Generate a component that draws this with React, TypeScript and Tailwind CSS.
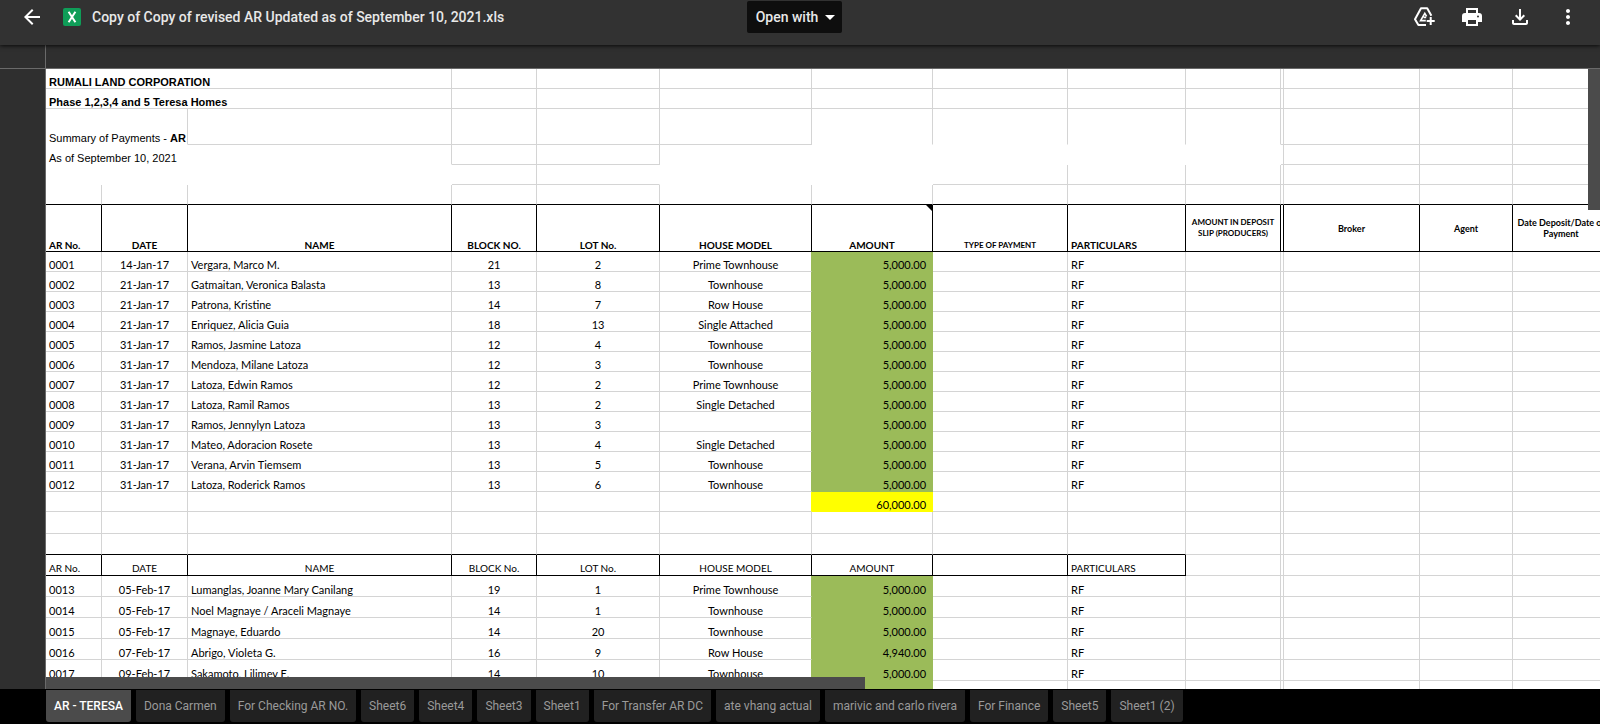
import React from "react";
import { MdArrowBack, MdArrowDropDown, MdMoreVert, MdOutlineFileDownload } from "react-icons/md";

const TABS = [
  "AR - TERESA",
  "Dona Carmen",
  "For Checking AR NO.",
  "Sheet6",
  "Sheet4",
  "Sheet3",
  "Sheet1",
  "For Transfer AR DC",
  "ate vhang actual",
  "marivic and carlo rivera",
  "For Finance",
  "Sheet5",
  "Sheet1 (2)",
];

type Payment = [no: string, date: string, name: string, block: string, lot: string, model: string, amount: string];

const JANUARY: Payment[] = [
  ["0001", "14-Jan-17", "Vergara, Marco M.", "21", "2", "Prime Townhouse", "5,000.00"],
  ["0002", "21-Jan-17", "Gatmaitan, Veronica Balasta", "13", "8", "Townhouse", "5,000.00"],
  ["0003", "21-Jan-17", "Patrona, Kristine", "14", "7", "Row House", "5,000.00"],
  ["0004", "21-Jan-17", "Enriquez, Alicia Guia", "18", "13", "Single Attached", "5,000.00"],
  ["0005", "31-Jan-17", "Ramos, Jasmine Latoza", "12", "4", "Townhouse", "5,000.00"],
  ["0006", "31-Jan-17", "Mendoza, Milane Latoza", "12", "3", "Townhouse", "5,000.00"],
  ["0007", "31-Jan-17", "Latoza, Edwin Ramos", "12", "2", "Prime Townhouse", "5,000.00"],
  ["0008", "31-Jan-17", "Latoza, Ramil Ramos", "13", "2", "Single Detached", "5,000.00"],
  ["0009", "31-Jan-17", "Ramos, Jennylyn Latoza", "13", "3", "", "5,000.00"],
  ["0010", "31-Jan-17", "Mateo, Adoracion Rosete", "13", "4", "Single Detached", "5,000.00"],
  ["0011", "31-Jan-17", "Verana, Arvin Tiemsem", "13", "5", "Townhouse", "5,000.00"],
  ["0012", "31-Jan-17", "Latoza, Roderick Ramos", "13", "6", "Townhouse", "5,000.00"],
];

const FEBRUARY: Payment[] = [
  ["0013", "05-Feb-17", "Lumanglas, Joanne Mary Canilang", "19", "1", "Prime Townhouse", "5,000.00"],
  ["0014", "05-Feb-17", "Noel Magnaye / Araceli Magnaye", "14", "1", "Townhouse", "5,000.00"],
  ["0015", "05-Feb-17", "Magnaye, Eduardo", "14", "20", "Townhouse", "5,000.00"],
  ["0016", "07-Feb-17", "Abrigo, Violeta G.", "16", "9", "Row House", "4,940.00"],
  ["0017", "09-Feb-17", "Sakamoto, Lilimey E.", "14", "10", "Townhouse", "5,000.00"],
  ["", "", "", "", "", "", ""],
];

type CellProps = {
  span?: number;
  right?: "grid" | "black" | "green" | "yellow" | "none";
  bottom?: "grid" | "black" | "green" | "yellow" | "none";
  className?: string;
  children?: React.ReactNode;
};

const RIGHT = {
  grid: "border-r-[#d4d4d4]",
  black: "border-r-black",
  green: "border-r-[#9bbb59]",
  yellow: "border-r-[#ffff00]",
  none: "border-r-transparent",
};

const BOTTOM = {
  grid: "border-b-[#d4d4d4]",
  black: "border-b-black",
  green: "border-b-[#9bbb59]",
  yellow: "border-b-[#ffff00]",
  none: "border-b-transparent",
};

function Cell({ span, right = "grid", bottom = "grid", className = "", children }: CellProps) {
  return (
    <td
      colSpan={span}
      className={`border-r border-b px-[3px] align-bottom whitespace-nowrap ${RIGHT[right]} ${BOTTOM[bottom]} ${className}`}
    >
      {children}
    </td>
  );
}

function Head({ bottom = "black", right = "black", className = "", children }: CellProps) {
  return (
    <th scope="col" className={`relative border-r border-b px-[3px] ${RIGHT[right]} ${BOTTOM[bottom]} ${className}`}>
      {children}
    </th>
  );
}

function Blanks({ count, bottom }: { count: number; bottom?: CellProps["bottom"] }) {
  return (
    <>
      {Array.from({ length: count }, (_, i) => (
        <Cell key={i} bottom={bottom} />
      ))}
    </>
  );
}

function PaymentRow({ row, height }: { row: Payment; height: string }) {
  const [no, date, name, block, lot, model, amount] = row;
  return (
    <tr className={height}>
      <Cell>{no}</Cell>
      <Cell className="text-center">{date}</Cell>
      <Cell>{name}</Cell>
      <Cell className="text-center">{block}</Cell>
      <Cell className="text-center">{lot}</Cell>
      <Cell right="green" className="text-center">
        {model}
      </Cell>
      <Cell right="green" bottom="green" className="bg-[#9bbb59] pr-[6px] text-right">
        {amount}
      </Cell>
      <Cell />
      <Cell>{no && "RF"}</Cell>
      <Blanks count={5} />
    </tr>
  );
}

function Sheet() {
  return (
    <table className="w-[1564px] table-fixed border-separate border-spacing-0 bg-white font-['Lato',sans-serif] text-[11px] leading-[12px] text-black">
      <colgroup>
        <col className="w-[56px]" />
        <col className="w-[86px]" />
        <col className="w-[264px]" />
        <col className="w-[85px]" />
        <col className="w-[123px]" />
        <col className="w-[152px]" />
        <col className="w-[121px]" />
        <col className="w-[135px]" />
        <col className="w-[118px]" />
        <col className="w-[95px]" />
        <col className="w-[3px]" />
        <col className="w-[136px]" />
        <col className="w-[93px]" />
        <col className="w-[97px]" />
      </colgroup>
      <tbody>
        <tr className="h-[20px] font-['Liberation_Sans',Arial,sans-serif]">
          <Cell span={3} className="font-bold">
            RUMALI LAND CORPORATION
          </Cell>
          <Blanks count={11} />
        </tr>
        <tr className="h-[20px] font-['Liberation_Sans',Arial,sans-serif]">
          <Cell span={3} className="font-bold">
            Phase 1,2,3,4 and 5 Teresa Homes
          </Cell>
          <Blanks count={11} />
        </tr>
        <tr className="h-[36px] font-['Liberation_Sans',Arial,sans-serif]">
          <Cell span={2} bottom="none">
            Summary of Payments - <b>AR</b>
          </Cell>
          <Blanks count={4} />
          <Blanks count={4} bottom="none" />
          <Blanks count={4} />
        </tr>
        <tr className="h-[20px] font-['Liberation_Sans',Arial,sans-serif]">
          <Cell span={3} bottom="none">
            As of September 10, 2021
          </Cell>
          <Blanks count={2} />
          <Cell span={5} right="none" bottom="none" />
          <Blanks count={4} />
        </tr>
        <tr className="h-[20px]">
          <Cell span={3} right="none" bottom="none" />
          <Cell />
          <Cell right="none" />
          <Cell span={2} right="none" bottom="none" />
          <Blanks count={7} />
        </tr>
        <tr className="h-[20px]">
          <Blanks count={14} bottom="black" />
        </tr>
        <tr className="h-[47px] align-bottom text-[10px]">
          <Head className="text-left">AR No.</Head>
          <Head>DATE</Head>
          <Head>NAME</Head>
          <Head>BLOCK NO.</Head>
          <Head>LOT No.</Head>
          <Head>HOUSE MODEL</Head>
          <Head>
            AMOUNT
            <span className="absolute top-0 right-0 h-[6px] w-[6px] bg-black [clip-path:polygon(0_0,100%_0,100%_100%)]" />
          </Head>
          <Head className="text-[8px] leading-[11px]">TYPE OF PAYMENT</Head>
          <Head className="text-left">PARTICULARS</Head>
          <Head className="align-middle text-[8px] leading-[11px]">AMOUNT IN DEPOSIT SLIP (PRODUCERS)</Head>
          <Head className="px-0" />
          <Head className="align-middle text-[9px] leading-[11px]">Broker</Head>
          <Head className="align-middle text-[9px] leading-[11px]">Agent</Head>
          <Head className="align-middle text-[9px] leading-[11px]">Date Deposit/Date of Payment</Head>
        </tr>
        {JANUARY.map((row) => (
          <PaymentRow key={row[0]} row={row} height="h-[20px]" />
        ))}
        <tr className="h-[20px]">
          <Blanks count={5} />
          <Cell right="yellow" />
          <Cell right="yellow" bottom="yellow" className="bg-[#ffff00] pr-[6px] text-right">
            60,000.00
          </Cell>
          <Blanks count={7} />
        </tr>
        <tr className="h-[22px]">
          <Blanks count={14} />
        </tr>
        <tr className="h-[21px]">
          <Blanks count={9} bottom="black" />
          <Blanks count={5} />
        </tr>
        <tr className="h-[21px] align-bottom text-[10px]">
          <Head className="pb-px text-left font-normal">AR No.</Head>
          <Head className="pb-px font-normal">DATE</Head>
          <Head className="pb-px font-normal">NAME</Head>
          <Head className="pb-px font-normal">BLOCK No.</Head>
          <Head className="pb-px font-normal">LOT No.</Head>
          <Head className="pb-px font-normal">HOUSE MODEL</Head>
          <Head className="pb-px font-normal">AMOUNT</Head>
          <Cell right="black" bottom="black" />
          <Head className="pb-px text-left font-normal">PARTICULARS</Head>
          <Blanks count={5} />
        </tr>
        {FEBRUARY.map((row) => (
          <PaymentRow key={row[0]} row={row} height="h-[21px]" />
        ))}
      </tbody>
    </table>
  );
}

function AddToDriveIcon() {
  return (
    <svg viewBox="0 0 24 24" className="h-[24px] w-[24px]" fill="none" stroke="currentColor" strokeWidth="2">
      <path d="M14 20 H6.4 L3 14.2 L9 3.2 H15.2 L19.4 10.8" strokeLinejoin="round" />
      <path d="M14.6 11.4 L12.8 8.4 L8.6 15.6 H13.8 M11.6 12.4 H14.2" strokeWidth="1.6" />
      <path d="M18.7 12 V20 M14.7 16 H22.7" />
    </svg>
  );
}

function PrintIcon() {
  return (
    <svg viewBox="0 0 24 24" className="h-[24px] w-[24px]" fill="currentColor" fillRule="evenodd">
      <path d="M16 8V5H8v3H6V3h12v5Z" />
      <path d="M18 21H6v-4H2v-6a3 3 0 0 1 3-3h14a3 3 0 0 1 3 3v6h-4Zm-2-2v-4H8v4ZM18 10.5a1 1 0 1 0 0 2a1 1 0 1 0 0-2Z" />
    </svg>
  );
}

export default function App() {
  return (
    <div className="flex h-screen flex-col overflow-hidden bg-black font-['Roboto',sans-serif]">
      <header className="relative z-10 grid h-[45px] shrink-0 grid-cols-[1fr_auto_1fr] items-start bg-[#323232] pr-[11px] text-white shadow-[0_1px_4px_rgba(0,0,0,0.8)]">
        <div className="flex h-[34px] items-center pl-[20px]">
          <button aria-label="Back" className="text-[24px]">
            <MdArrowBack />
          </button>
          <span className="ml-[19px] flex h-[18px] w-[18px] items-center justify-center rounded-[2px] bg-[#0f9d58]">
            <svg viewBox="0 0 18 18" className="h-[18px] w-[18px]" fill="none" stroke="#fff" strokeWidth="2">
              <path d="M5.6 3.8 L12.4 14.2 M12.4 3.8 L5.6 14.2" />
            </svg>
          </span>
          <h1 className="ml-[11px] text-[14px] font-medium whitespace-nowrap text-[#e8e8e8]">
            Copy of Copy of revised AR Updated as of September 10, 2021.xls
          </h1>
        </div>
        <button className="mt-px flex h-[32px] items-center rounded-[2px] bg-[#0e0e0e] pl-[9px] text-[14px] font-medium text-[#e8e8e8]">
          Open with
          <MdArrowDropDown className="text-[24px] text-white" />
        </button>
        <div className="flex h-[34px] items-center justify-end gap-[24px] pr-[9px] text-[24px]">
          <button aria-label="Add shortcut to Drive">
            <AddToDriveIcon />
          </button>
          <button aria-label="Print">
            <PrintIcon />
          </button>
          <button aria-label="Download">
            <MdOutlineFileDownload />
          </button>
          <button aria-label="More actions">
            <MdMoreVert />
          </button>
        </div>
      </header>
      <main className="relative flex min-h-0 flex-1 flex-col bg-[#2f2f2f]">
        <div className="flex h-[24px] shrink-0 border-b border-[#6a6a6a]">
          <div className="w-[46px] border-r border-[#6a6a6a]" />
        </div>
        <div className="flex min-h-0 flex-1">
          <div className="w-[46px] shrink-0 border-r border-[#6a6a6a]" />
          <div className="relative min-w-0 flex-1 overflow-hidden bg-white">
            <Sheet />
            <div className="absolute top-0 right-0 h-[141px] w-[12px] bg-[#4b4b4b]" />
            <div className="absolute bottom-0 left-0 h-[12px] w-[819px] bg-[#4b4b4b]" />
          </div>
        </div>
      </main>
      <nav className="flex h-[35px] shrink-0 gap-[5px] bg-black pt-px pb-[2px] pl-[46px]">
        {TABS.map((tab, i) => (
          <button
            key={tab}
            className={`h-[32px] rounded-b-[3px] px-[8px] text-[12px] whitespace-nowrap ${
              i === 0 ? "bg-[#4b4b4b] font-medium text-white" : "bg-[#212121] text-[#9a9a9a]"
            }`}
          >
            {tab}
          </button>
        ))}
      </nav>
    </div>
  );
}
